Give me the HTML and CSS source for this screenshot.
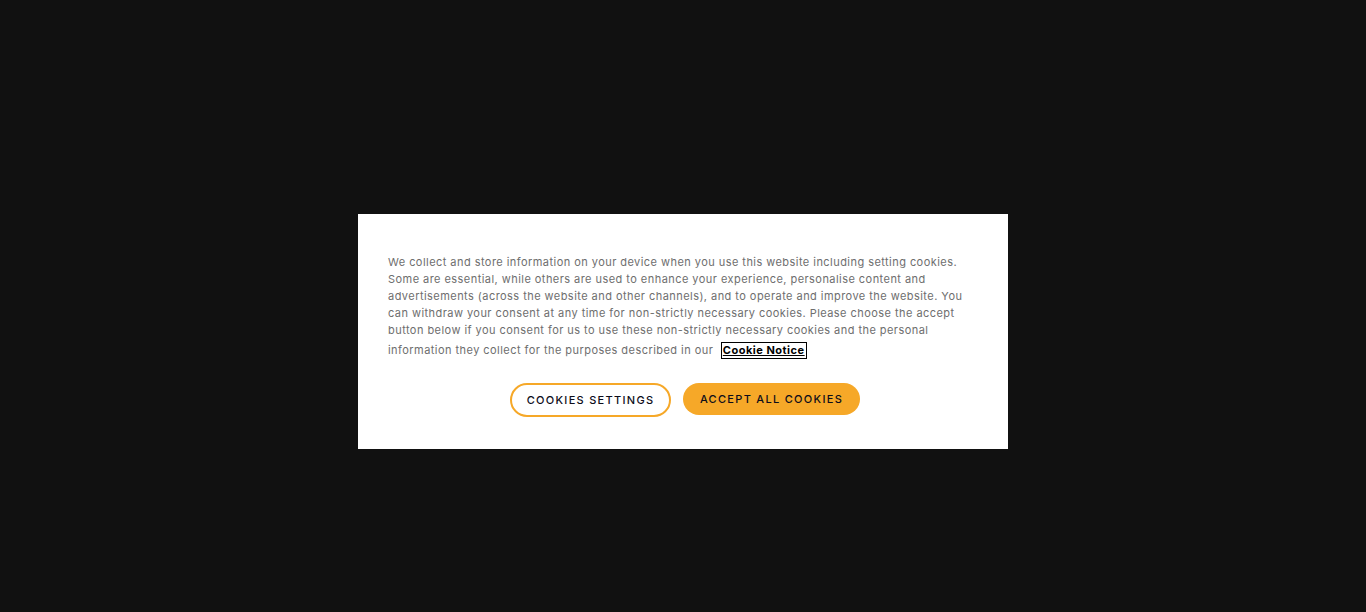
FILE: index.html
```html
<!DOCTYPE html>
<html>
<head>
<meta charset="utf-8">
<link rel="stylesheet" href="styles.css">
</head>
<body>
<div class="overlay">
  <div class="dialog">
    <p class="policy">We collect and store information on your device when you use this website including setting cookies. Some are essential, while others are used to enhance your experience, personalise content and advertisements (across the website and other channels), and to operate and improve the website. You can withdraw your consent at any time for non-strictly necessary cookies. Please choose the accept button below if you consent for us to use these non-strictly necessary cookies and the personal information they collect for the purposes described in our <a class="notice" href="#">Cookie Notice</a></p>
    <div class="actions">
      <button class="btn btn-outline">Cookies Settings</button>
      <button class="btn btn-fill">Accept All Cookies</button>
    </div>
  </div>
</div>
</body>
</html>
```

FILE: styles.css
```css
html, body {
  margin: 0;
  padding: 0;
  height: 100%;
  background: #111111;
}
.overlay {
  height: 612px;
  display: flex;
  justify-content: center;
}
.dialog {
  width: 650px;
  box-sizing: border-box;
  background: #ffffff;
  padding: 40px 30px 32px 30px;
  margin-top: 214px;
  align-self: flex-start;
}
.policy {
  margin: 0;
  font-family: "Inter", sans-serif;
  font-size: 11px;
  line-height: 17px;
  color: #6e6e6e;
  letter-spacing: 0.45px;
}
.notice {
  display: inline-block;
  margin-left: 4px;
  margin-top: 3px;
  padding: 0 1px;
  line-height: 15px;
  border: 1px solid #000;
  color: #000;
  font-weight: 700;
  text-decoration: underline;
  font-size: 11px;
  letter-spacing: 0.5px;
}
.actions {
  display: flex;
  justify-content: center;
  align-items: flex-start;
  gap: 12px;
  margin-top: 24px;
  padding-left: 4px;
}
.btn {
  font-family: "Inter", sans-serif;
  font-size: 11px;
  font-weight: 500;
  text-transform: uppercase;
  letter-spacing: 1.3px;
  color: #0d0d1a;
  border-radius: 17px;
  cursor: pointer;
  padding: 0;
}
.btn-outline {
  width: 161px;
  height: 34px;
  background: #fff;
  border: 2px solid #f6a828;
}
.btn-fill {
  width: 177px;
  height: 32px;
  background: #f6a828;
  border: none;
}
```
